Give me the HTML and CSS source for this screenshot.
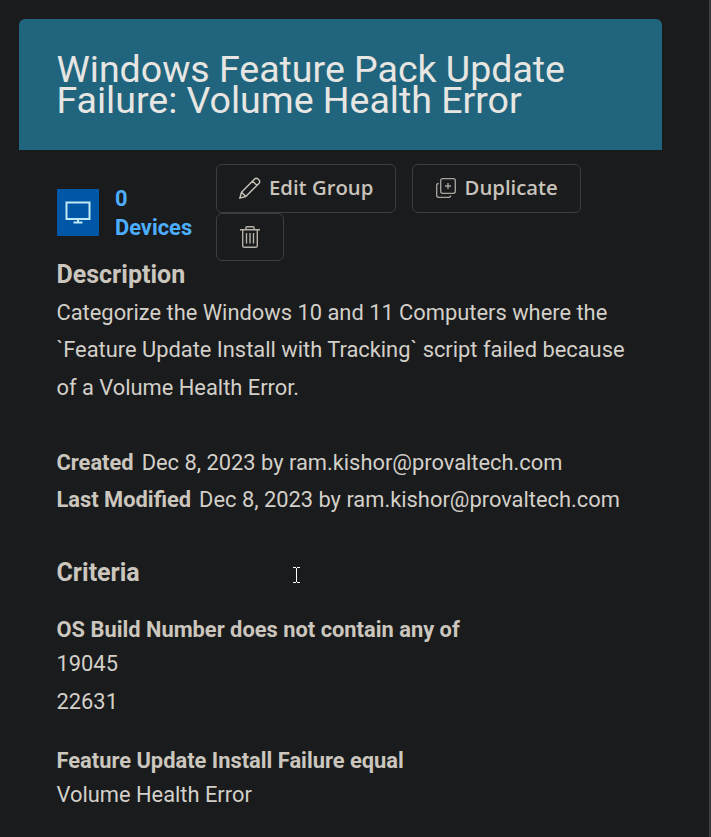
FILE: index.html
```
<!DOCTYPE html>
<html lang="en">
<head>
<meta charset="utf-8">
<title>Device Group</title>
<link rel="stylesheet" href="styles.css">
</head>
<body>
<main class="panel">
  <header class="banner">
    <h1 class="banner-title">Windows Feature Pack Update Failure: Volume Health Error</h1>
  </header>
  <section class="content">
    <div class="toolbar">
      <div class="devices">
        <span class="device-icon">
          <svg width="26" height="24" viewBox="0 0 26 24" fill="none" stroke="#bfe9f5" stroke-width="2"><path d="M1.500 1.500h23V18h-23zM13 18v3M8.500 21.500h9"/></svg>
        </span>
        <a class="device-count">0 Devices</a>
      </div>
      <div class="actions">
        <button class="btn btn-edit">
          <svg width="22" height="22" viewBox="0 0 22 22" fill="none" stroke="#c8c3bb" stroke-width="1.4" stroke-linejoin="round"><path d="M.8 21.2l1.700-6L15.600 2.100q1.700-1.700 3.400 0l.9.9q1.700 1.700 0 3.400L6.800 19.500zM13.600 4.100l4.300 4.300M2.500 15.200l4.300 4.300"/></svg>
          <span>Edit Group</span>
        </button>
        <button class="btn btn-duplicate">
          <svg width="20" height="20" viewBox="0 0 20 20" fill="none" stroke="#aaa69f" stroke-width="1.3"><rect x="4.700" y=".7" width="14.600" height="14.600" rx="2"/><path d="M12 5v6M9 8h6M2.700 5.500H2.500Q.7 5.500.7 7.500v9.800q0 2 2 2h10q2 0 2-1.800"/></svg>
          <span>Duplicate</span>
        </button>
        <button class="btn btn-delete" aria-label="Delete">
          <svg width="20" height="22" viewBox="0 0 20 22" fill="none" stroke="#b5b0a8" stroke-width="1.400"><path d="M0 3.700h20M6 3.700V1.500q0-.8.8-.8h6.400q.8 0 .8.800v2.200M2.700 3.700v16q0 1.600 1.600 1.600h11.400q1.600 0 1.600-1.600v-16M6.500 7v10.500M10 7v10.500M13.500 7v10.500"/></svg>
        </button>
      </div>
    </div>
    <h2 class="heading">Description</h2>
    <p class="text">Categorize the Windows 10 and 11 Computers where the `Feature Update Install with Tracking` script failed because of a Volume Health Error.</p>
    <dl class="meta">
      <div><dt>Created</dt><dd>Dec 8, 2023 by ram.kishor@provaltech.com</dd></div>
      <div><dt>Last Modified</dt><dd>Dec 8, 2023 by ram.kishor@provaltech.com</dd></div>
    </dl>
    <h2 class="heading">Criteria</h2>
    <div class="criterion">
      <h3 class="label">OS Build Number does not contain any of</h3>
      <p class="text">19045</p>
      <p class="text">22631</p>
    </div>
    <div class="criterion">
      <h3 class="label">Feature Update Install Failure equal</h3>
      <p class="text">Volume Health Error</p>
    </div>
  </section>
</main>
<svg class="cursor" width="7" height="17" viewBox="0 0 7 17" fill="none" stroke="#fff" shape-rendering="crispEdges"><path d="M0 .5h3M4 .5h3M3.500 1v14M0 15.500h3M4 15.500h3"/></svg>
</body>
</html>
```
FILE: styles.css
```
* { box-sizing: border-box; }
html { background: #1a1b1c; }
body {
  margin: 0;
  height: 837px;
  overflow: hidden;
  border-right: 2px solid #3b3c3d;
  background: #1a1b1c;
  color: #d3cfc9;
  font: 21.875px/37.5px Roboto, sans-serif;
}
h1, h2, h3, p, dl, dd { margin: 0; }
.panel { width: 643px; margin: 19px 0 0 19px; }
.banner {
  height: 131px;
  padding: 35px 38px 0 37.5px;
  border-radius: 6px 6px 0 0;
  background: #20657d;
}
.banner-title { color: #e8e6e3; font-size: 37.5px; font-weight: 400; line-height: 31px; }
.content { padding: 14px 30px 0 37.5px; }
.toolbar { display: flex; height: 97.75px; }
.devices { display: flex; width: 159.5px; height: 97px; flex: none; align-items: center; gap: 16.5px; }
.device-icon {
  display: flex;
  width: 42px;
  height: 47px;
  flex: none;
  align-items: center;
  justify-content: center;
  background: #0057a8;
}
.device-count { width: 85px; color: #4daeff; font-weight: 700; line-height: 29px; }
.actions { display: flex; flex-wrap: wrap; align-content: flex-start; column-gap: 16px; width: 400px; }
.btn {
  display: flex;
  height: 49px;
  padding: 0 20px 1px 22px;
  align-items: center;
  gap: 8px;
  border: 1px solid #3b3d3f;
  border-radius: 6px;
  background: transparent;
  color: #c8c3bb;
  font: 600 20.3125px/28px "Open Sans", sans-serif;
  white-space: nowrap;
}
.btn span { padding-bottom: 3px; }
.btn svg { flex: none; }
.btn-edit { width: 180px; }
.btn-duplicate { width: 169px; padding-left: 23px; gap: 8.5px; }
.btn-delete { width: 68px; height: 48px; padding: 0 0 0 23px; }
.heading { color: #cbc6be; font-size: 25px; line-height: 32px; font-weight: 700; }
.toolbar + .heading { height: 32px; line-height: 26px; }
.meta { margin: 37.5px 0 37.75px; }
.meta div { display: flex; gap: 8px; }
.meta dt { color: #cbc6be; font-weight: 700; }
.criterion { margin-top: 25px; }
.criterion .text + .text { margin-top: 0.5px; }
.criterion + .criterion { margin-top: 24.25px; }
.label { margin-bottom: -0.75px; color: #cbc6be; font-size: 21.875px; line-height: 32px; font-weight: 700; }
.cursor { position: absolute; left: 293px; top: 567px; }
```
